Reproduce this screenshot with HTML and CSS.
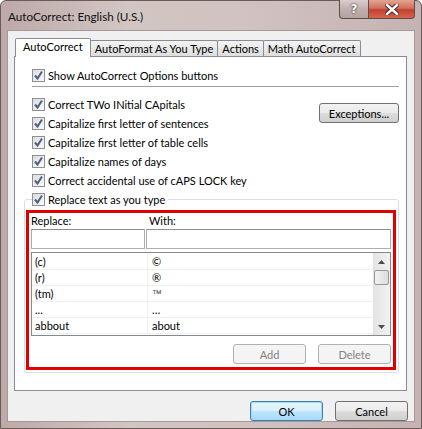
FILE: index.html
```html
<html>
<head>
	<title>AutoCorrect: English (U.S.)</title>
	<link rel="stylesheet" href="styles.css">
</head>
<body>
	<div class="window">
		<div class="titlebar">
			<div class="caption">AutoCorrect: English (U.S.)</div>
			<div class="caption-buttons">
				<div class="cap-btn help">?</div>
				<div class="cap-btn close">
					<svg width="14" height="11" viewBox="0 0 14 11">
						<path d="M2 1 L12 10 M12 1 L2 10" stroke="#4a3030" stroke-width="4.4" stroke-linecap="square"/>
						<path d="M2 1 L12 10 M12 1 L2 10" stroke="#fff" stroke-width="2.4" stroke-linecap="square"/>
					</svg>
				</div>
			</div>
		</div>

		<div class="client">
			<div class="tabs">
				<div class="tab active">AutoCorrect</div>
				<div class="tab">AutoFormat As You Type</div>
				<div class="tab">Actions</div>
				<div class="tab">Math AutoCorrect</div>
			</div>

			<div class="panel">
				<div class="row">
					<span class="cb"><svg width="11" height="11" viewBox="0 0 11 11"><path d="M2 5.5 L4.5 8.5 L9 1.5" fill="none" stroke="#4d6185" stroke-width="2"/></svg></span>
					Show AutoCorrect Options buttons
				</div>
				<div class="separator"></div>

				<div class="options">
					<div class="option-list">
						<div class="row">
							<span class="cb"><svg width="11" height="11" viewBox="0 0 11 11"><path d="M2 5.5 L4.5 8.5 L9 1.5" fill="none" stroke="#4d6185" stroke-width="2"/></svg></span>
							Correct TWo INitial CApitals
						</div>
						<div class="row">
							<span class="cb"><svg width="11" height="11" viewBox="0 0 11 11"><path d="M2 5.5 L4.5 8.5 L9 1.5" fill="none" stroke="#4d6185" stroke-width="2"/></svg></span>
							Capitalize first letter of sentences
						</div>
						<div class="row">
							<span class="cb"><svg width="11" height="11" viewBox="0 0 11 11"><path d="M2 5.5 L4.5 8.5 L9 1.5" fill="none" stroke="#4d6185" stroke-width="2"/></svg></span>
							Capitalize first letter of table cells
						</div>
						<div class="row">
							<span class="cb"><svg width="11" height="11" viewBox="0 0 11 11"><path d="M2 5.5 L4.5 8.5 L9 1.5" fill="none" stroke="#4d6185" stroke-width="2"/></svg></span>
							Capitalize names of days
						</div>
						<div class="row">
							<span class="cb"><svg width="11" height="11" viewBox="0 0 11 11"><path d="M2 5.5 L4.5 8.5 L9 1.5" fill="none" stroke="#4d6185" stroke-width="2"/></svg></span>
							Correct accidental use of cAPS LOCK key
						</div>
					</div>
					<div class="btn exceptions">Exceptions...</div>
				</div>

				<div class="group">
					<div class="row legend">
						<span class="cb"><svg width="11" height="11" viewBox="0 0 11 11"><path d="M2 5.5 L4.5 8.5 L9 1.5" fill="none" stroke="#4d6185" stroke-width="2"/></svg></span>
						Replace text as you type
					</div>

					<div class="highlight">
						<div class="labels">
							<div class="col-replace">Replace:</div>
							<div class="col-with">With:</div>
						</div>
						<div class="inputs">
							<div class="field field-replace"></div>
							<div class="field field-with"></div>
						</div>

						<div class="listbox">
							<div class="entries">
								<div class="entry"><span class="c1">(c)</span><span class="c2">©</span></div>
								<div class="entry"><span class="c1">(r)</span><span class="c2">®</span></div>
								<div class="entry"><span class="c1">(tm)</span><span class="c2 tm">™</span></div>
								<div class="entry"><span class="c1">...</span><span class="c2">…</span></div>
								<div class="entry"><span class="c1">abbout</span><span class="c2">about</span></div>
							</div>
							<div class="scrollbar">
								<div class="arrow"><svg width="7" height="4" viewBox="0 0 7 4"><path d="M0 4 L3.5 0 L7 4 Z" fill="#4d4d4d"/></svg></div>
								<div class="thumb"></div>
								<div class="track"></div>
								<div class="arrow"><svg width="7" height="4" viewBox="0 0 7 4"><path d="M0 0 L3.5 4 L7 0 Z" fill="#4d4d4d"/></svg></div>
							</div>
						</div>

						<div class="list-buttons">
							<div class="btn disabled">Add</div>
							<div class="btn disabled">Delete</div>
						</div>
					</div>
				</div>
			</div>

			<div class="footer">
				<div class="btn default">OK</div>
				<div class="btn">Cancel</div>
			</div>
		</div>
	</div>
</body>
</html>
```

FILE: styles.css
```css
body {
    margin: 0;
    background-color: #fff;
    font-family: Lato, "Noto Sans", sans-serif;
    font-size: 11px;
    color: #000;
}

.window {
    width: 422px;
    height: 429px;
    box-sizing: border-box;
    display: flex;
    flex-direction: column;
    border: 1px solid #6b5a59;
    border-radius: 6px 6px 0 0;
    background: linear-gradient(to right, #bca9a8 0%, #d2c6c3 30%, #cfc2c0 60%, #c4b3b2 100%);
}

.titlebar {
    height: 29px;
    display: flex;
    justify-content: space-between;
    align-items: flex-start;
}

.caption {
    padding: 8px 0 0 7px;
    font-size: 11.7px;
    color: #111;
}

.caption-buttons {
    display: flex;
    margin-right: 6px;
    margin-top: -1px;
}

.cap-btn {
    height: 19px;
    box-sizing: border-box;
    border: 1px solid #5f4d4d;
    border-top: none;
    display: flex;
    align-items: center;
    justify-content: center;
}

.help {
    width: 29px;
    border-right: none;
    border-radius: 0 0 0 4px;
    background: linear-gradient(#d9cfcd, #bfb0ae 50%, #b3a2a0);
    color: #fff;
    font-family: "DejaVu Sans", sans-serif;
    font-weight: bold;
    font-size: 12px;
    text-shadow: 0 0 2px #3a2a2a, 0 0 1px #3a2a2a;
}

.close {
    width: 47px;
    border-radius: 0 0 4px 0;
    background: linear-gradient(#e4a593, #d0705c 45%, #c1412e 55%, #d7644b);
}

.client {
    flex: 1;
    margin: 0 6px 6px 6px;
    border: 1px solid #a79797;
    background-color: #f0f0f0;
    display: flex;
    flex-direction: column;
}

.tabs {
    display: flex;
    align-items: flex-end;
    padding: 6px 0 0 7px;
    height: 19px;
}

.tab {
    height: 15px;
    padding: 0 4px 0 4px;
    border: 1px solid #898c95;
    border-bottom: none;
    margin-left: -1px;
    background: linear-gradient(#f3f3f3, #dedede);
    border-radius: 2px 2px 0 0;
    line-height: 15px;
    white-space: nowrap;
}

.tab.active {
    height: 18px;
    padding: 0 7px;
    background: #fff;
    margin-left: 0;
    margin-bottom: -1px;
    position: relative;
    z-index: 1;
}

.panel {
    margin: 0 7px 0 6px;
    height: 324px;
    border: 1px solid #898c95;
    background-color: #fff;
    padding: 9px 7px 0 17px;
}

.row {
    height: 19px;
    display: flex;
    align-items: center;
    white-space: nowrap;
}

.cb {
    width: 11px;
    height: 11px;
    border: 1px solid #8e8f8f;
    background: linear-gradient(135deg, #dcdcdc, #fbfbfb);
    margin-right: 3px;
    display: inline-flex;
}

.separator {
    height: 1px;
    background-color: #a0a0a0;
    margin: 1px 0 8px 0;
}

.options {
    display: flex;
    justify-content: space-between;
    align-items: flex-start;
}

.btn {
    height: 20px;
    box-sizing: border-box;
    border: 1px solid #707070;
    border-radius: 3px;
    background: linear-gradient(#f2f2f2 0%, #ebebeb 50%, #dddddd 51%, #cfcfcf 100%);
    display: flex;
    align-items: center;
    justify-content: center;
}

.exceptions {
    width: 80px;
    margin-top: 8px;
}

.group {
    margin: 0 0 0 -8px;
    border: 1px solid #d5dfe5;
    border-radius: 3px;
    height: 172px;
    margin-top: 9px;
}

.legend {
    margin: -10px 0 0 7px;
    padding-right: 3px;
    background-color: #fff;
    align-self: flex-start;
    display: inline-flex;
}

.highlight {
    margin: 1px 2px 0 1px;
    border: 3px solid #e00000;
    height: 154px;
    padding: 0 2px 0 2px;
}

.labels {
    display: flex;
    height: 14px;
    line-height: 14px;
    margin-top: 1px;
}

.col-replace {
    width: 118px;
}

.inputs {
    display: flex;
    margin-top: 1px;
}

.field {
    height: 18px;
    border: 1px solid #abadb3;
    border-top-color: #8e8f8f;
    background-color: #fff;
}

.field-replace {
    width: 112px;
}

.field-with {
    flex: 1;
    margin-left: 1px;
}

.listbox {
    margin-top: 3px;
    height: 82px;
    border: 1px solid #828790;
    display: flex;
}

.entries {
    flex: 1;
    padding-top: 1px;
}

.entry {
    display: flex;
    height: 15px;
    line-height: 15px;
    border-bottom: 1px solid #f0f0f0;
}

.c1 {
    width: 112px;
    padding-left: 3px;
    border-right: 1px solid #f0f0f0;
}

.c2 {
    padding-left: 4px;
}

.tm {
    font-family: "Liberation Sans", sans-serif;
    font-size: 10px;
    color: #444;
}

.scrollbar {
    width: 17px;
    background: linear-gradient(to right, #e3e3e3, #f2f2f2);
    display: flex;
    flex-direction: column;
    align-items: center;
}

.arrow {
    height: 17px;
    display: flex;
    align-items: center;
}

.thumb {
    width: 15px;
    height: 15px;
    box-sizing: border-box;
    border: 1px solid #979797;
    border-radius: 2px;
    background: linear-gradient(to right, #f2f2f2, #dcdcdc);
}

.track {
    flex: 1;
}

.list-buttons {
    display: flex;
    justify-content: flex-end;
    gap: 12px;
    margin: 8px 0 0 0;
}

.list-buttons .btn {
    width: 73px;
}

.btn.disabled {
    border-color: #adb2b5;
    background: #f4f4f4;
    color: #838383;
}

.footer {
    display: flex;
    justify-content: flex-end;
    gap: 12px;
    padding: 10px 6px 0 0;
}

.footer .btn {
    width: 73px;
}

.btn.default {
    border-color: #3c7fb1;
    background: linear-gradient(#eaf6fd 0%, #d9f0fc 50%, #bee6fd 51%, #a7d9f5 100%);
    box-shadow: inset 0 0 0 1px #9fdcf7;
}
```
